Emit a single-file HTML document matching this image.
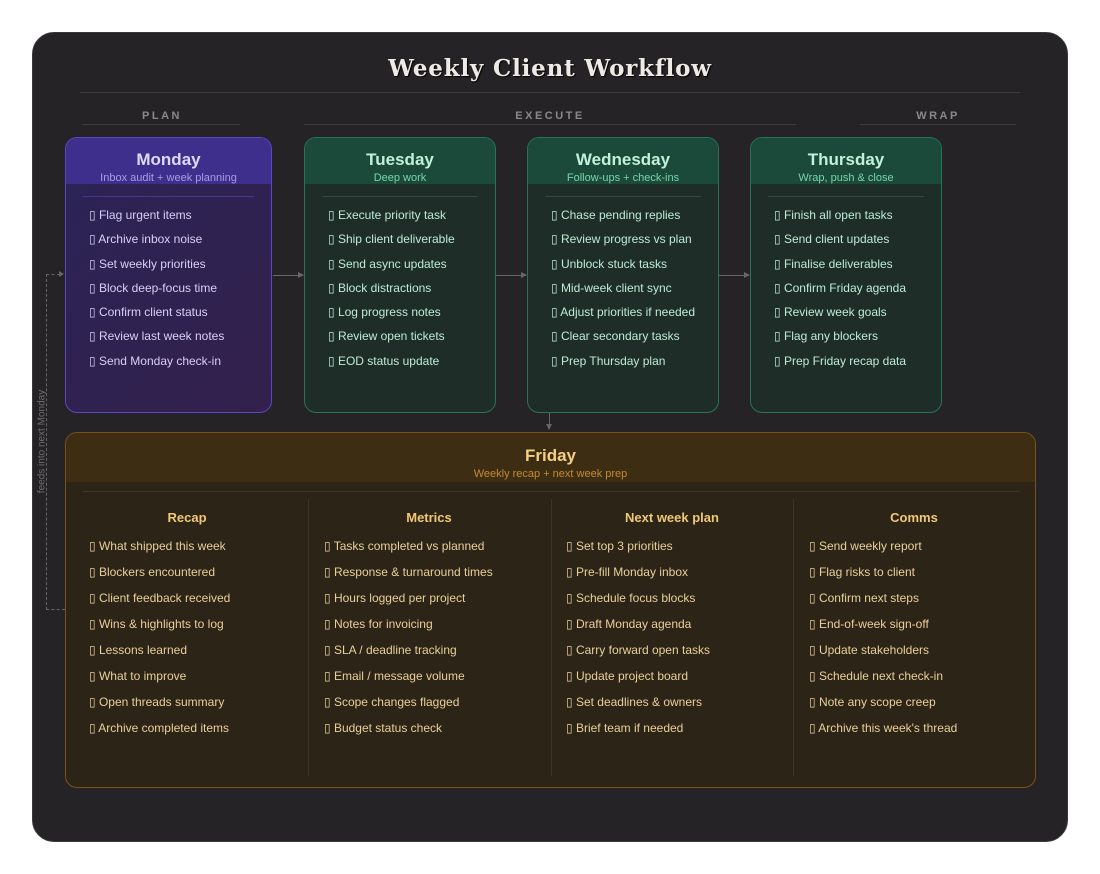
<!DOCTYPE html>
<html><head><meta charset="utf-8"><style>
*{margin:0;padding:0;box-sizing:border-box}
body{width:1100px;height:874px;background:#fff;position:relative;font-family:"Liberation Sans",sans-serif;overflow:hidden}
.panel{position:absolute;left:32px;top:32px;width:1036px;height:810px;background:#252326;border-radius:22px;border:1px solid #3a383b}
.a{position:absolute}
.title{left:0;width:1100px;top:55px;text-align:center;font-family:"DejaVu Serif","Liberation Serif",serif;font-weight:bold;font-size:23px;color:#eeeae6;letter-spacing:0.8px;text-shadow:1px 1px 1px #000}
.hl{position:absolute;height:1px;background:#3c3a3d}
.sec{position:absolute;font-size:11px;font-weight:bold;letter-spacing:2.5px;color:#8a888a;text-align:center;top:110px}
.card{position:absolute;top:137px;height:276px;border-radius:12px;overflow:hidden;border:1px solid}
.card .hd{height:46px;text-align:center}
.card .t{font-size:17px;font-weight:bold;padding-top:13px;line-height:18px}
.card .s{font-size:11px;margin-top:3px}
.card .ln{position:absolute;left:17px;right:17px;top:58px;height:1px}
.card ul{list-style:none;position:absolute;left:23px;top:69px;font-size:12px}
.card li{height:24.3px;line-height:16px}
.mon{left:65px;width:207px;border-color:#5b45c9;background:linear-gradient(135deg,#2b2456,#33204c)}
.mon .hd{background:#3e2f8c}.mon .t{color:#e0d8ff}.mon .s{color:#a89be6}.mon li{color:#d8d0f6}.mon .ln{background:#4b3590}
.grn{width:192px;border-color:#267358;background:#1f2d28}
.grn .hd{background:#1b4a3b}.grn .t{color:#c3f0da}.grn .s{color:#74d6aa}.grn li{color:#bdebd6}.grn .ln{background:#2f4a40}
.fri{position:absolute;left:65px;top:432px;width:971px;height:356px;border:1px solid #7a5318;border-radius:12px;overflow:hidden;background:#2c2416}
.fri .hd{height:49px;background:#3d2e13;text-align:center}
.fri .t{font-size:17px;font-weight:bold;color:#f5cf85;padding-top:14px;line-height:18px}
.fri .s{font-size:11px;color:#c38a35;margin-top:3px}
.col{position:absolute;top:66px;width:242px;height:277px}
.col h4{text-align:center;font-size:13px;color:#f0c878;margin-top:11px;line-height:16px}
.col ul{list-style:none;position:absolute;left:23px;top:39px;font-size:12px;color:#e9d09c}
.col li{height:26px;line-height:16px}
.vd{position:absolute;top:66px;width:1px;height:277px;background:#3f3424}
.arr{position:absolute;height:1px;background:#666}
.arr:after{content:"";position:absolute;right:-1px;top:-3px;border-left:6px solid #666;border-top:3.5px solid transparent;border-bottom:3.5px solid transparent}
</style></head><body>
<div class="panel"></div>
<div class="a title">Weekly Client Workflow</div>
<div class="hl" style="left:80px;width:940px;top:92px"></div>
<div class="sec" style="left:82px;width:160px">PLAN</div>
<div class="hl" style="left:82px;width:158px;top:124px"></div>
<div class="sec" style="left:304px;width:492px">EXECUTE</div>
<div class="hl" style="left:304px;width:492px;top:124px"></div>
<div class="sec" style="left:860px;width:156px">WRAP</div>
<div class="hl" style="left:860px;width:156px;top:124px"></div>

<div class="card mon"><div class="hd"><div class="t">Monday</div><div class="s">Inbox audit + week planning</div></div><div class="ln"></div>
<ul><li>▯ Flag urgent items</li><li>▯ Archive inbox noise</li><li>▯ Set weekly priorities</li><li>▯ Block deep-focus time</li><li>▯ Confirm client status</li><li>▯ Review last week notes</li><li>▯ Send Monday check-in</li></ul></div>
<div class="card grn" style="left:304px"><div class="hd"><div class="t">Tuesday</div><div class="s">Deep work</div></div><div class="ln"></div>
<ul><li>▯ Execute priority task</li><li>▯ Ship client deliverable</li><li>▯ Send async updates</li><li>▯ Block distractions</li><li>▯ Log progress notes</li><li>▯ Review open tickets</li><li>▯ EOD status update</li></ul></div>
<div class="card grn" style="left:527px"><div class="hd"><div class="t">Wednesday</div><div class="s">Follow-ups + check-ins</div></div><div class="ln"></div>
<ul><li>▯ Chase pending replies</li><li>▯ Review progress vs plan</li><li>▯ Unblock stuck tasks</li><li>▯ Mid-week client sync</li><li>▯ Adjust priorities if needed</li><li>▯ Clear secondary tasks</li><li>▯ Prep Thursday plan</li></ul></div>
<div class="card grn" style="left:750px"><div class="hd"><div class="t">Thursday</div><div class="s">Wrap, push &amp; close</div></div><div class="ln"></div>
<ul><li>▯ Finish all open tasks</li><li>▯ Send client updates</li><li>▯ Finalise deliverables</li><li>▯ Confirm Friday agenda</li><li>▯ Review week goals</li><li>▯ Flag any blockers</li><li>▯ Prep Friday recap data</li></ul></div>

<div class="arr" style="left:273px;width:30px;top:275px"></div>
<div class="arr" style="left:496px;width:30px;top:275px"></div>
<div class="arr" style="left:719px;width:30px;top:275px"></div>
<div class="a" style="left:549px;top:413px;width:1px;height:16px;background:#666"></div>
<div class="a" style="left:546px;top:424px;border-top:6px solid #666;border-left:3.5px solid transparent;border-right:3.5px solid transparent"></div>

<div class="a" style="left:46px;top:274px;width:0;height:336px;border-left:1px dashed #666"></div>
<div class="a" style="left:46px;top:274px;width:14px;height:0;border-top:1px dashed #666"></div>
<div class="a" style="left:59px;top:271px;border-left:5px solid #666;border-top:3px solid transparent;border-bottom:3px solid transparent"></div>
<div class="a" style="left:46px;top:609px;width:19px;height:0;border-top:1px dashed #666"></div>
<div class="a" style="left:-18px;top:436px;width:120px;text-align:center;font-size:10px;color:#6e6c6e;transform:rotate(-90deg)">feeds into next Monday</div>

<div class="fri"><div class="hd"><div class="t">Friday</div><div class="s">Weekly recap + next week prep</div></div>
<div class="a" style="left:17px;right:15px;top:58px;height:1px;background:#3f3424"></div>
<div class="vd" style="left:242px"></div><div class="vd" style="left:485px"></div><div class="vd" style="left:727px"></div>
<div class="col" style="left:0"><h4>Recap</h4><ul><li>▯ What shipped this week</li><li>▯ Blockers encountered</li><li>▯ Client feedback received</li><li>▯ Wins &amp; highlights to log</li><li>▯ Lessons learned</li><li>▯ What to improve</li><li>▯ Open threads summary</li><li>▯ Archive completed items</li></ul></div>
<div class="col" style="left:242px"><h4>Metrics</h4><ul style="left:16px"><li>▯ Tasks completed vs planned</li><li>▯ Response &amp; turnaround times</li><li>▯ Hours logged per project</li><li>▯ Notes for invoicing</li><li>▯ SLA / deadline tracking</li><li>▯ Email / message volume</li><li>▯ Scope changes flagged</li><li>▯ Budget status check</li></ul></div>
<div class="col" style="left:485px"><h4>Next week plan</h4><ul style="left:15px"><li>▯ Set top 3 priorities</li><li>▯ Pre-fill Monday inbox</li><li>▯ Schedule focus blocks</li><li>▯ Draft Monday agenda</li><li>▯ Carry forward open tasks</li><li>▯ Update project board</li><li>▯ Set deadlines &amp; owners</li><li>▯ Brief team if needed</li></ul></div>
<div class="col" style="left:727px"><h4>Comms</h4><ul style="left:16px"><li>▯ Send weekly report</li><li>▯ Flag risks to client</li><li>▯ Confirm next steps</li><li>▯ End-of-week sign-off</li><li>▯ Update stakeholders</li><li>▯ Schedule next check-in</li><li>▯ Note any scope creep</li><li>▯ Archive this week's thread</li></ul></div>
</div>
</body></html>
